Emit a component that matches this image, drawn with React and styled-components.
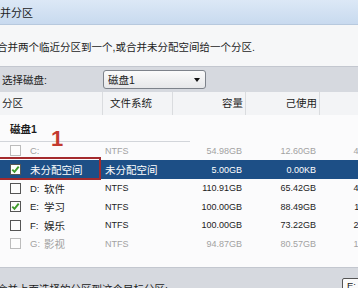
import React from "react";
import styled, { createGlobalStyle } from "styled-components";

const GlobalStyle = createGlobalStyle`
  html, body {
    margin: 0;
    padding: 0;
    background: #fff;
  }
  body {
    font-family: "Liberation Sans", "Noto Sans CJK SC", sans-serif;
  }
`;

const partitions = [
  { drive: "C:", label: "", fs: "NTFS", size: "54.98GB", used: "12.60GB", free: "42.38GB", disabled: true },
  { drive: "", label: "未分配空间", fs: "未分配空间", size: "5.00GB", used: "0.00KB", free: "5.00GB", checked: true, selected: true },
  { drive: "D:", label: "软件", fs: "NTFS", size: "110.91GB", used: "65.42GB", free: "45.49GB" },
  { drive: "E:", label: "学习", fs: "NTFS", size: "100.00GB", used: "88.49GB", free: "11.51GB", checked: true },
  { drive: "F:", label: "娱乐", fs: "NTFS", size: "100.00GB", used: "73.22GB", free: "26.78GB" },
  { drive: "G:", label: "影视", fs: "NTFS", size: "94.87GB", used: "80.57GB", free: "14.30GB", disabled: true },
];

function CheckBox({ checked, disabled }) {
  return (
    <svg width="11" height="11" viewBox="0 0 11 11">
      <rect x="0.5" y="0.5" width="10" height="10" fill="#fdfdfd" stroke={disabled ? "#bcbcbc" : "#555"} />
      {checked && (
        <path d="M2.3 5.6 L4.5 7.9 L8.7 2.6" fill="none" stroke="#3f9b2c" strokeWidth="1.9" />
      )}
    </svg>
  );
}

export default function App() {
  return (
    <Window>
      <GlobalStyle />
      <TitleBar>并分区</TitleBar>
      <Intro>合并两个临近分区到一个,或合并未分配空间给一个分区.</Intro>
      <DiskBar>
        <span>选择磁盘:</span>
        <Dropdown>
          <span>磁盘1</span>
          <Arrow />
        </Dropdown>
      </DiskBar>
      <Table>
        <Header>
          <HeadCell>分区</HeadCell>
          <HeadCell $pad={7}>文件系统</HeadCell>
          <HeadCell $right>容量</HeadCell>
          <HeadCell $right>己使用</HeadCell>
          <HeadCell />
        </Header>
        <Group>磁盘1</Group>
        {partitions.map((p, i) => (
          <Row key={i} $selected={p.selected} $disabled={p.disabled}>
            <NameCell>
              <CheckBox checked={p.checked} disabled={p.disabled} />
              {p.drive && <Drive>{p.drive}</Drive>}
              {p.label && <span>{p.label}</span>}
            </NameCell>
            <Cell $small={p.fs === "NTFS"}>{p.fs}</Cell>
            <NumCell>{p.size}</NumCell>
            <NumCell>{p.used}</NumCell>
            <NumCell>{p.free}</NumCell>
          </Row>
        ))}
      </Table>
      <BottomBar>
        <span>合并上面选择的分区到这个目标分区:</span>
        <TargetBox>E:</TargetBox>
      </BottomBar>
      <Marker>1</Marker>
      <Highlight />
    </Window>
  );
}

const Window = styled.div`
  position: relative;
  width: 358px;
  height: 288px;
  overflow: hidden;
  background: #f7f8f9;
  color: #1c1c1c;
  font-size: 10.5px;
`;

const TitleBar = styled.div`
  height: 25px;
  display: flex;
  align-items: center;
  padding-bottom: 1px;
  box-sizing: border-box;
  font-size: 11px;
  background: linear-gradient(#dce8f6, #c8daef);
  border-bottom: 1px solid #b7c9de;
`;

const Intro = styled.div`
  height: 41px;
  display: flex;
  align-items: center;
  padding-top: 2px;
  box-sizing: border-box;
  text-indent: -3px;
  white-space: nowrap;
  background: #f6f7f8;
`;

const DiskBar = styled.div`
  height: 26px;
  display: flex;
  align-items: center;
  padding-left: 2px;
  gap: 56px;
  box-sizing: border-box;
  background: #d6d9df;
  border-top: 1px solid #c3c7cf;
`;

const Dropdown = styled.div`
  width: 103px;
  height: 19px;
  box-sizing: border-box;
  display: flex;
  align-items: center;
  justify-content: space-between;
  padding: 0 5px 0 4px;
  border: 1px solid #7d828a;
  border-radius: 3px;
  background: linear-gradient(#fbfbfb, #e6e7e9);
`;

const Arrow = styled.span`
  width: 0;
  height: 0;
  border-left: 3.5px solid transparent;
  border-right: 3.5px solid transparent;
  border-top: 4px solid #111;
`;

const Table = styled.div`
  background: #fbfbfc;
  height: 175px;
`;

const Header = styled.div`
  display: grid;
  grid-template-columns: 103px 70px 73px 74px 73px;
  height: 23px;
  background: #f3f4f6;
`;

const HeadCell = styled.div`
  display: flex;
  align-items: center;
  justify-content: ${(p) => (p.$right ? "flex-end" : "flex-start")};
  padding: ${(p) => (p.$right ? "0 2px 2px 0" : `0 0 2px ${p.$pad ?? 2}px`)};
  border-right: 1px solid #dadcdf;
  box-sizing: border-box;
`;

const Group = styled.div`
  height: 26.7px;
  box-sizing: border-box;
  width: 190px;
  padding: 6px 0 0 10px;
  font-weight: bold;
  border-bottom: 1px solid #d2d5da;
`;

const Row = styled.div`
  display: grid;
  grid-template-columns: 103px 70px 73px 74px 73px;
  height: 18.6px;
  align-items: center;
  background: ${(p) => (p.$selected ? "#1d4f86" : "transparent")};
  color: ${(p) => (p.$selected ? "#fff" : p.$disabled ? "#a2a2a2" : "#1c1c1c")};
`;

const NameCell = styled.div`
  display: flex;
  align-items: center;
  padding-left: 10px;
  white-space: nowrap;
  svg {
    margin-right: 9px;
    flex: none;
  }
`;

const Drive = styled.span`
  font-size: 9.5px;
  width: 14px;
`;

const Cell = styled.div`
  padding-left: 2px;
  white-space: nowrap;
  font-size: ${(p) => (p.$small ? "9px" : "10.5px")};
`;

const NumCell = styled.div`
  text-align: right;
  padding-right: 4px;
  font-size: 9px;
  white-space: nowrap;
`;

const BottomBar = styled.div`
  height: 21px;
  display: flex;
  justify-content: space-between;
  align-items: flex-start;
  padding-top: 13px;
  box-sizing: border-box;
  text-indent: -3px;
  white-space: nowrap;
  background: #d6d9df;
  border-top: 1px solid #c3c7cf;
`;

const TargetBox = styled.div`
  width: 30px;
  height: 20px;
  margin: -3px -14px 0 0;
  box-sizing: border-box;
  border: 1px solid #555;
  border-radius: 2px;
  background: #fafafa;
  padding: 1px 0 0 4px;
  text-indent: 0;
  font-size: 9.5px;
`;

const Marker = styled.div`
  position: absolute;
  left: 51px;
  top: 126px;
  font-size: 22px;
  font-weight: bold;
  color: #c33a2f;
`;

const Highlight = styled.div`
  position: absolute;
  left: -2px;
  top: 157px;
  width: 103px;
  height: 23px;
  box-sizing: border-box;
  border: 2px solid #a42a2d;
`;
